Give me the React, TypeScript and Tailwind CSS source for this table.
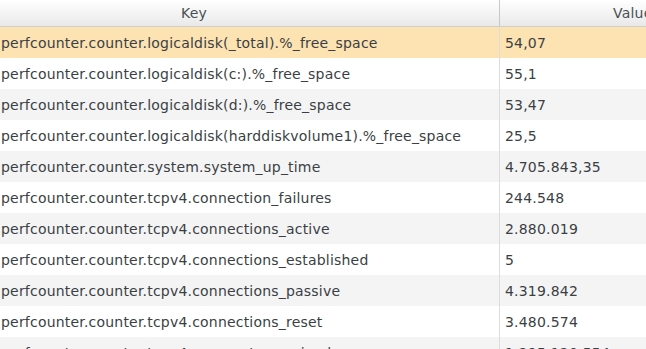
const rows: [string, string][] = [
  ["perfcounter.counter.logicaldisk(_total).%_free_space", "54,07"],
  ["perfcounter.counter.logicaldisk(c:).%_free_space", "55,1"],
  ["perfcounter.counter.logicaldisk(d:).%_free_space", "53,47"],
  ["perfcounter.counter.logicaldisk(harddiskvolume1).%_free_space", "25,5"],
  ["perfcounter.counter.system.system_up_time", "4.705.843,35"],
  ["perfcounter.counter.tcpv4.connection_failures", "244.548"],
  ["perfcounter.counter.tcpv4.connections_active", "2.880.019"],
  ["perfcounter.counter.tcpv4.connections_established", "5"],
  ["perfcounter.counter.tcpv4.connections_passive", "4.319.842"],
  ["perfcounter.counter.tcpv4.connections_reset", "3.480.574"],
  ["perfcounter.counter.tcpv4.segments_received", "1.295.120.554"],
];

export default function App() {
  return (
    <div className="w-[646px] h-[349px] overflow-hidden bg-white text-[14px] tracking-[0.2px] text-[#3a3f44] font-['DejaVu_Sans',Verdana,sans-serif]">
      {/* header */}
      <div className="flex h-[27px] bg-gradient-to-b from-white to-[#e9e9e9] border-b border-[#cfcfcf] text-[#4a4f55]">
        <div className="w-[500px] shrink-0 border-r border-[#c8c8c8] flex items-center pl-[181px]">Key</div>
        <div className="flex-1 flex items-center pl-[113px] whitespace-nowrap">Value</div>
      </div>
      {rows.map(([k, v], i) => (
        <div
          key={k}
          className={`flex h-[31px] ${i === 0 ? "bg-[#fde2b2]" : i % 2 === 0 ? "bg-[#f4f4f4]" : "bg-white"}`}
        >
          <div className="w-[500px] shrink-0 border-r border-[#dcdcdc] flex items-center pl-px pt-px whitespace-nowrap overflow-hidden">
            {k}
          </div>
          <div className="flex-1 flex items-center pl-[5px] pt-px whitespace-nowrap">{v}</div>
        </div>
      ))}
    </div>
  );
}
